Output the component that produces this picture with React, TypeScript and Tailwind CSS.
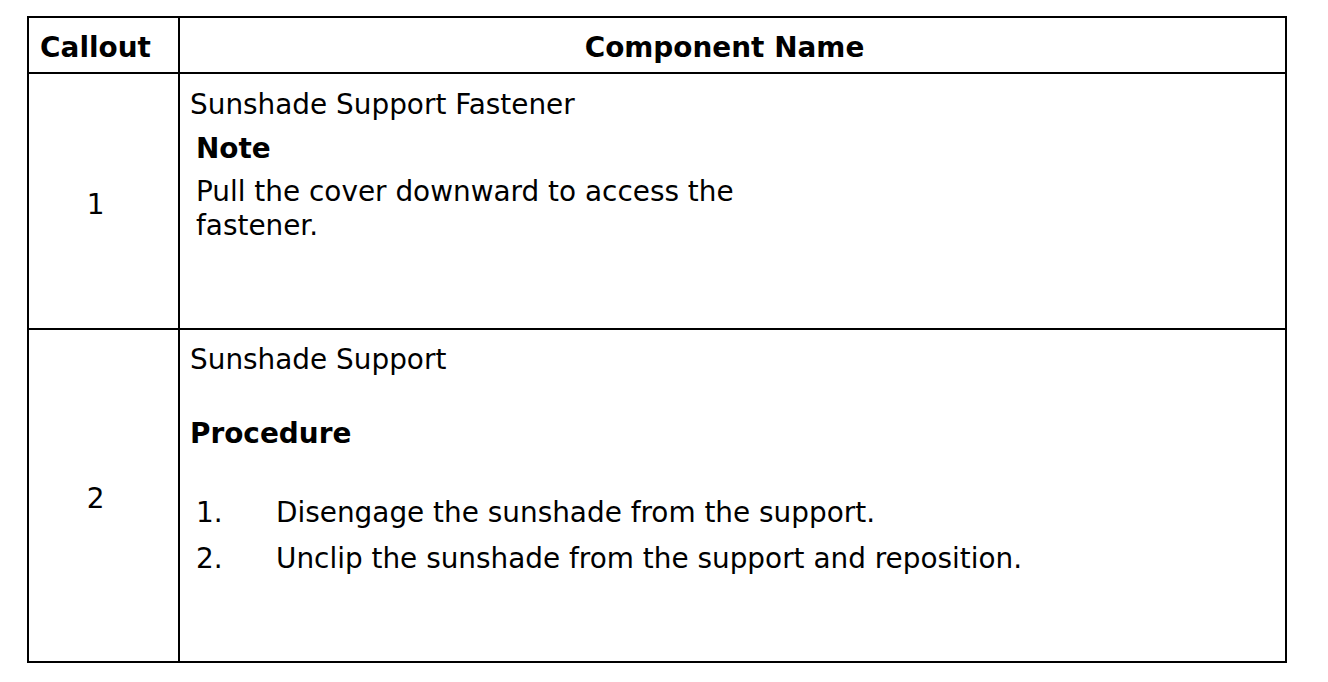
const font = { fontFamily: '"DejaVu Sans", Verdana, sans-serif' };

const App = () => {
  return (
    <div className="min-h-screen w-full bg-white pl-[27px] pt-[16px] text-black" style={font}>
      <div className="w-[1260px] border-2 border-black text-[27.9px] leading-[34px]">
        <div className="grid grid-cols-[151px_1fr]">
          {/* HEADER */}
          <div className="flex h-[56px] items-center justify-center border-r-2 border-b-2 border-black pt-[6px] pr-4 font-bold">
            Callout
          </div>
          <div className="flex h-[56px] items-center justify-center border-b-2 border-black pt-[6px] pr-4 font-bold">
            Component Name
          </div>

          {/* ROW 1 */}
          <div className="flex h-[256px] items-center justify-center border-r-2 border-b-2 border-black pt-[7px] pr-4">
            1
          </div>
          <div className="h-[256px] border-b-2 border-black pl-[10px] pt-[14px]">
            <p>Sunshade Support Fastener</p>
            <div className="mt-[10px] pl-[6px]">
              <h4 className="font-bold">Note</h4>
              <p className="mt-[9px] w-[560px]">
                Pull the cover downward to access the fastener.
              </p>
            </div>
          </div>

          {/* ROW 2 */}
          <div className="flex h-[331px] items-center justify-center border-r-2 border-black pt-[7px] pr-4">
            2
          </div>
          <div className="h-[331px] pl-[10px] pt-[13px]">
            <p>Sunshade Support</p>
            <h4 className="mt-[40px] font-bold">Procedure</h4>
            <ol className="mt-[45px] flex flex-col gap-[12px] pl-[6px]">
              <li className="flex">
                <span className="w-[80px] shrink-0">1.</span>
                <span>Disengage the sunshade from the support.</span>
              </li>
              <li className="flex">
                <span className="w-[80px] shrink-0">2.</span>
                <span>Unclip the sunshade from the support and reposition.</span>
              </li>
            </ol>
          </div>
        </div>
      </div>
    </div>
  );
};

export default App;
